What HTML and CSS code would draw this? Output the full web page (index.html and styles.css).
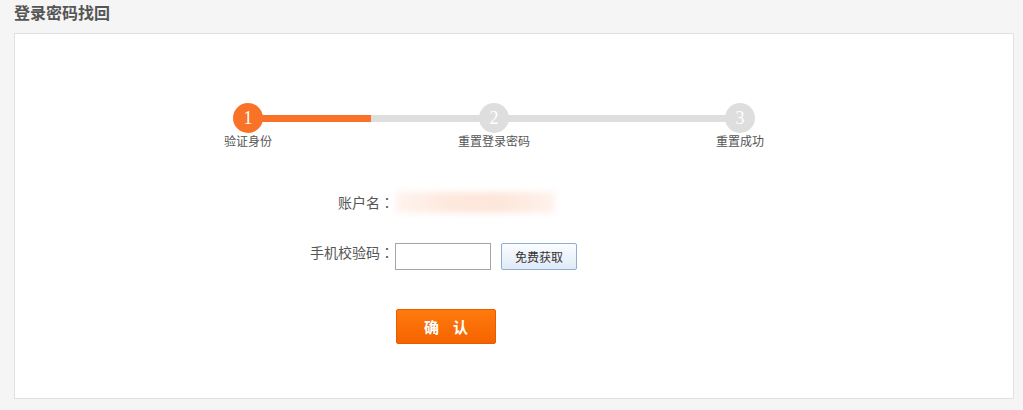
FILE: index.html
```html
<!DOCTYPE html>
<html lang="zh">
<head>
<meta charset="utf-8">
<title>登录密码找回</title>
<link rel="stylesheet" href="styles.css">
</head>
<body>
<h1 class="page-title">登录密码找回</h1>
<div class="panel">
  <div class="steps">
    <div class="steps-track"><div class="steps-fill"></div></div>
    <div class="step step-active">
      <span class="step-num">1</span>
      <span class="step-label">验证身份</span>
    </div>
    <div class="step">
      <span class="step-num">2</span>
      <span class="step-label">重置登录密码</span>
    </div>
    <div class="step">
      <span class="step-num">3</span>
      <span class="step-label">重置成功</span>
    </div>
  </div>

  <div class="form">
    <div class="form-row row-account">
      <label class="form-label">账户名<span class="colon">：</span></label>
      <div class="account-value"><span class="account-blur"></span></div>
    </div>
    <div class="form-row row-code">
      <label class="form-label">手机校验码<span class="colon">：</span></label>
      <div class="form-field">
        <input class="code-input" type="text">
        <button class="code-btn" type="button">免费获取</button>
      </div>
    </div>
    <div class="form-row row-submit">
      <span class="form-label"></span>
      <button class="submit-btn" type="button">确 认</button>
    </div>
  </div>
</div>
</body>
</html>
```

FILE: styles.css
```css
* { box-sizing: border-box; }

html, body {
  margin: 0;
  padding: 0;
  background: #f5f5f5;
  font-family: "Liberation Sans", Arial, "Noto Sans CJK SC", sans-serif;
  color: #555;
}

.page-title {
  margin: 0;
  padding: 0 0 0 14px;
  height: 33px;
  line-height: 27px;
  font-size: 16px;
  font-weight: bold;
  color: #555;
}

.panel {
  margin-left: 14px;
  width: 1000px;
  height: 366px;
  background: #fff;
  border: 1px solid #e1e1e1;
  padding-top: 69px;
}

.steps {
  position: relative;
  display: grid;
  grid-template-columns: repeat(3, 246px);
  margin-left: 110px;
  width: 738px;
}

.steps-track {
  position: absolute;
  top: 12px;
  left: 123px;
  right: 123px;
  height: 7px;
  background: #dedede;
}

.steps-fill {
  width: 123px;
  height: 100%;
  background: #f87328;
}

.step {
  position: relative;
  display: flex;
  flex-direction: column;
  align-items: center;
}

.step-num {
  width: 30px;
  height: 30px;
  border-radius: 50%;
  background: #dedede;
  color: #fff;
  font-family: "Liberation Serif", "Times New Roman", serif;
  font-size: 18px;
  line-height: 30px;
  text-align: center;
}

.step-active .step-num {
  background: #f87328;
}

.step-label {
  margin-top: 1px;
  font-size: 12px;
  line-height: 16px;
  color: #555;
}

.form {
  margin-top: 40px;
  margin-left: 277px;
  display: flex;
  flex-direction: column;
}

.form-row {
  display: flex;
  align-items: flex-start;
}

.form-label {
  width: 102px;
  flex: none;
  text-align: right;
  font-size: 14px;
  color: #555;
}

.colon {
  display: inline-block;
  width: 14px;
  text-align: center;
  font-family: "Noto Sans CJK JP", sans-serif;
}

.row-account {
  height: 25px;
  align-items: center;
}

.row-account .form-label {
  line-height: 25px;
}

.account-value {
  width: 165px;
  height: 25px;
  padding: 2px 4px 2px 2px;
}

.account-blur {
  display: block;
  width: 100%;
  height: 100%;
  background: linear-gradient(90deg, #fff4ee 0%, #fde8dd 35%, #fde6da 65%, #fff2ec 100%);
  filter: blur(3px);
}

.row-code {
  margin-top: 28px;
}

.row-code .form-label {
  line-height: 16px;
  padding-top: 1px;
}

.form-field {
  display: flex;
  align-items: center;
  gap: 10px;
  margin-left: 1px;
}

.code-input {
  width: 96px;
  height: 27px;
  margin: 0;
  border: 1px solid #a5a5a5;
  padding: 2px 4px;
  font-size: 12px;
}

.code-btn {
  width: 76px;
  height: 27px;
  margin: 0;
  padding: 0;
  border: 1px solid #8eaed5;
  border-radius: 2px;
  background: linear-gradient(#fbfdff, #dfeaf7);
  font-family: "Liberation Sans", Arial, "Noto Sans CJK SC", sans-serif;
  font-size: 12px;
  color: #333;
}

.row-submit {
  margin-top: 39px;
}

.submit-btn {
  width: 100px;
  height: 35px;
  margin: 0 0 0 2px;
  padding: 0 0 0 5px;
  border: 1px solid #e65c00;
  border-radius: 2px;
  background: linear-gradient(#ff7a0d, #f56300);
  color: #fff;
  font-family: "Liberation Sans", Arial, "Noto Sans CJK SC", sans-serif;
  font-size: 15px;
  font-weight: bold;
  letter-spacing: 5px;
}
```
